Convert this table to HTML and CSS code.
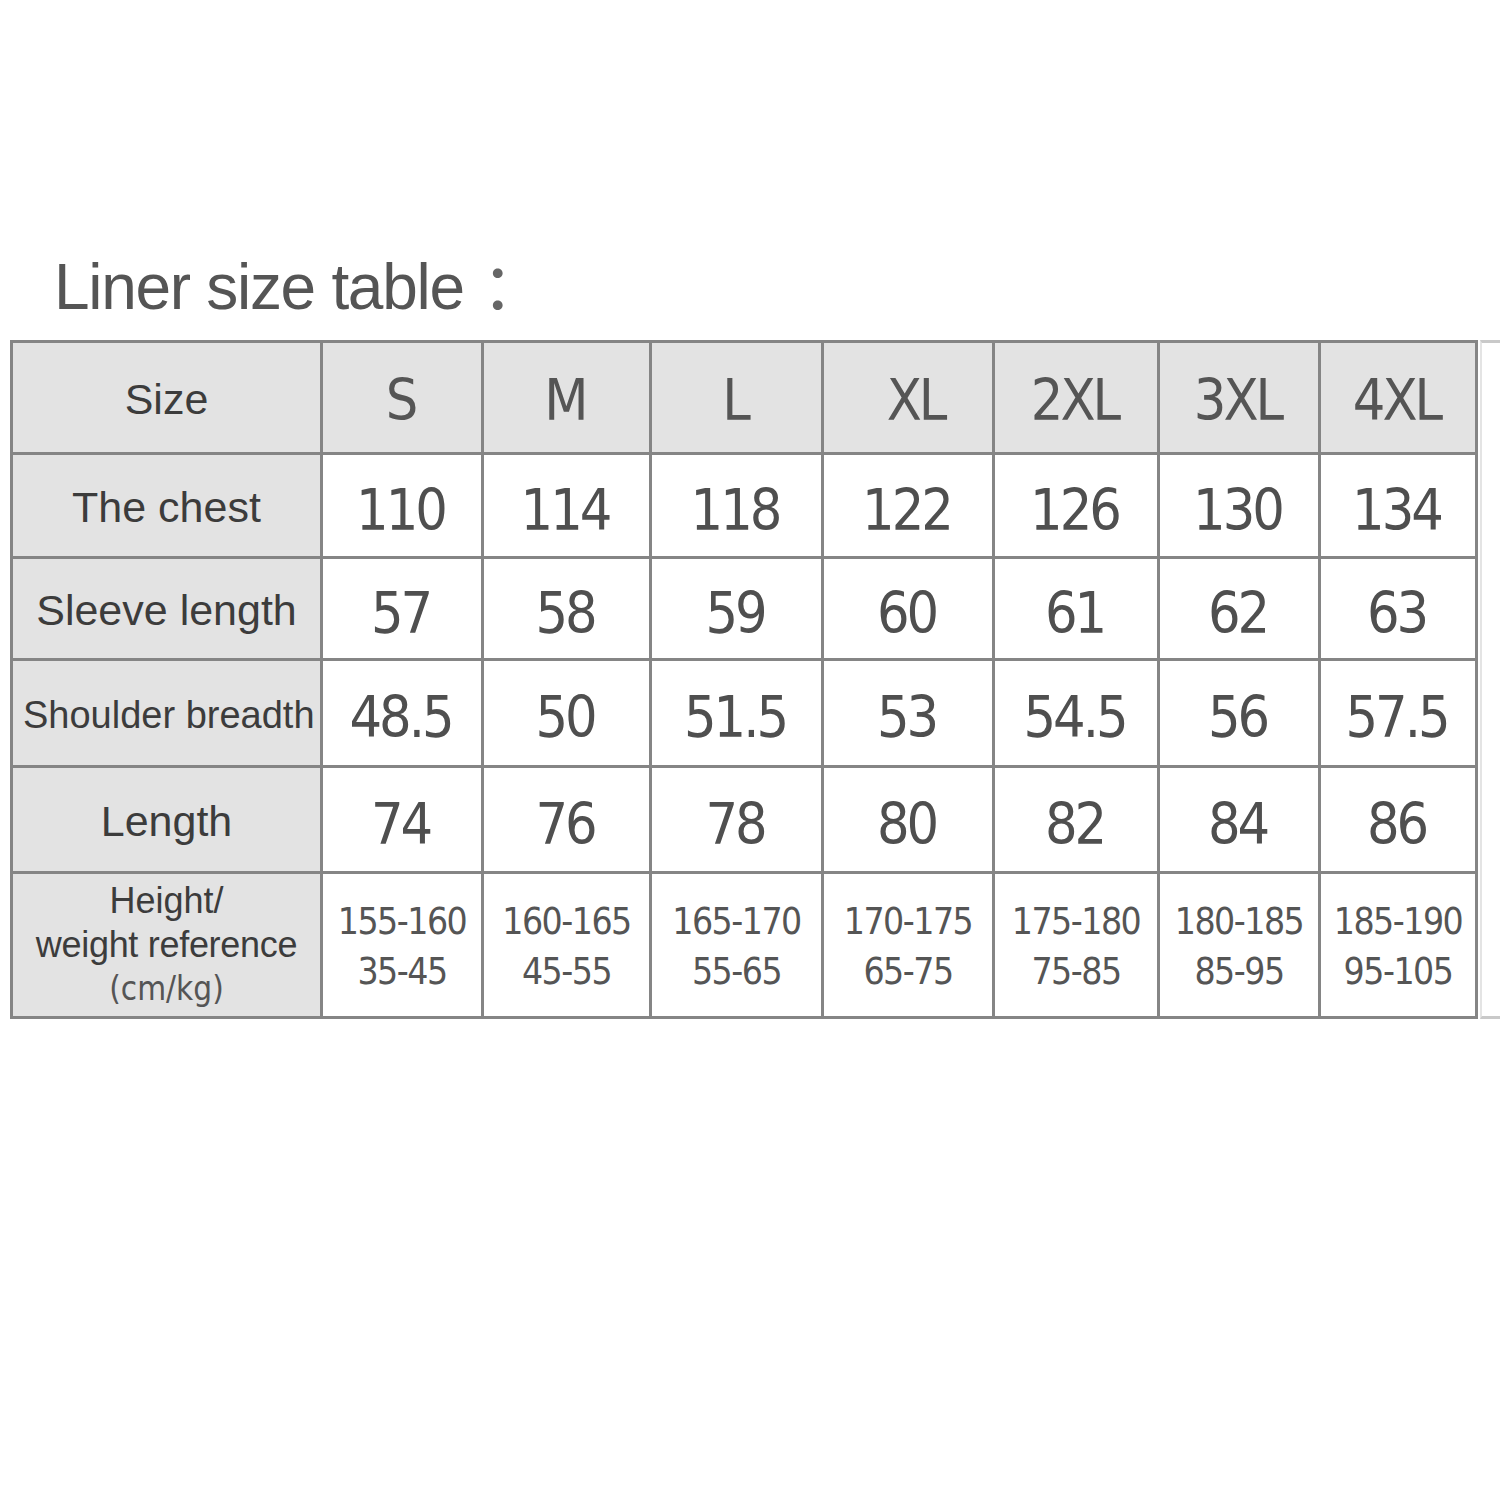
FILE: index.html
```html
<!DOCTYPE html>
<html>
<head>
<meta charset="utf-8">
<link rel="stylesheet" href="styles.css">
</head>
<body>
<h1 class="title">Liner size table<span class="colon">：</span></h1>
<div class="wrap">
  <div class="grid">
    <div class="cell head label">Size</div>
    <div class="cell head num">S</div>
    <div class="cell head num">M</div>
    <div class="cell head num">L</div>
    <div class="cell head num xl">XL</div>
    <div class="cell head num">2XL</div>
    <div class="cell head num">3XL</div>
    <div class="cell head num">4XL</div>

    <div class="cell head label">The chest</div>
    <div class="cell num">110</div>
    <div class="cell num">114</div>
    <div class="cell num">118</div>
    <div class="cell num">122</div>
    <div class="cell num">126</div>
    <div class="cell num">130</div>
    <div class="cell num">134</div>

    <div class="cell head label">Sleeve length</div>
    <div class="cell num">57</div>
    <div class="cell num">58</div>
    <div class="cell num">59</div>
    <div class="cell num">60</div>
    <div class="cell num">61</div>
    <div class="cell num">62</div>
    <div class="cell num">63</div>

    <div class="cell head label small">Shoulder breadth</div>
    <div class="cell num">48.5</div>
    <div class="cell num">50</div>
    <div class="cell num">51.5</div>
    <div class="cell num">53</div>
    <div class="cell num">54.5</div>
    <div class="cell num">56</div>
    <div class="cell num">57.5</div>

    <div class="cell head label">Length</div>
    <div class="cell num">74</div>
    <div class="cell num">76</div>
    <div class="cell num">78</div>
    <div class="cell num">80</div>
    <div class="cell num">82</div>
    <div class="cell num">84</div>
    <div class="cell num">86</div>

    <div class="cell head label multi">
      <span class="l1">Height/</span>
      <span class="l2">weight reference</span>
      <span class="l3">(cm/kg)</span>
    </div>
    <div class="cell range"><span>155-160</span><span>35-45</span></div>
    <div class="cell range"><span>160-165</span><span>45-55</span></div>
    <div class="cell range"><span>165-170</span><span>55-65</span></div>
    <div class="cell range"><span>170-175</span><span>65-75</span></div>
    <div class="cell range"><span>175-180</span><span>75-85</span></div>
    <div class="cell range"><span>180-185</span><span>85-95</span></div>
    <div class="cell range"><span>185-190</span><span>95-105</span></div>
  </div>
  <div class="tail"></div>
</div>
</body>
</html>
```

FILE: styles.css
```css
html, body {
  margin: 0;
  padding: 0;
  background: #ffffff;
}

.title {
  margin: 249px 0 0 54px;
  font-family: "Liberation Sans", Arial, sans-serif;
  font-weight: normal;
  font-size: 64px;
  line-height: 65px;
  letter-spacing: -1.3px;
  color: #555555;
}

.colon {
  font-family: "Noto Sans CJK SC", sans-serif;
  letter-spacing: 0;
  margin-left: 18px;
  color: #666666;
}

.wrap {
  display: flex;
  align-items: stretch;
  margin: 20px 0 0 10px;
}

.grid {
  display: grid;
  grid-template-columns: 307px 158px 165px 169px 168px 162px 158px 154px;
  grid-template-rows: 109px 101px 99px 104px 103px 142px;
  gap: 3px;
  padding: 3px;
  background: #858585;
}

.tail {
  flex: 1;
  border-top: 3px solid #c9c9c9;
  border-bottom: 3px solid #c9c9c9;
  border-left: 2px solid #e4e4e4;
  margin-left: 2px;
}

.cell {
  background: #ffffff;
  display: flex;
  align-items: center;
  justify-content: center;
  color: #4f4f4f;
}

.head {
  background: #e3e3e3;
}

.label {
  font-family: "Liberation Sans", Arial, sans-serif;
  font-size: 43px;
  color: #3c3c3c;
  white-space: nowrap;
  padding-top: 4px;
}

.label.small {
  font-size: 38px;
  justify-content: flex-start;
  padding-left: 10px;
}

.num {
  font-family: "DejaVu Sans Condensed", "DejaVu Sans", sans-serif;
  font-stretch: condensed;
  font-size: 57px;
  letter-spacing: -3px;
  padding-right: 3px;
  padding-top: 8px;
}

.head.num {
  color: #555555;
  padding-top: 4px;
}

.xl {
  padding-left: 18px;
}

.multi {
  flex-direction: column;
  gap: 0;
  padding-top: 0;
}

.multi span {
  display: block;
  line-height: 44px;
}

.l1, .l2 {
  font-size: 36px;
}

.l2 {
  letter-spacing: -0.3px;
}

.l3 {
  font-family: "DejaVu Sans Condensed", "DejaVu Sans", sans-serif;
  font-stretch: condensed;
  font-size: 33px;
  color: #555555;
}

.range {
  flex-direction: column;
  font-family: "DejaVu Sans Condensed", "DejaVu Sans", sans-serif;
  font-stretch: condensed;
  font-size: 37px;
  letter-spacing: -1.5px;
  padding-top: 4px;
  color: #555555;
}

.range span {
  display: block;
  line-height: 50px;
}
```
